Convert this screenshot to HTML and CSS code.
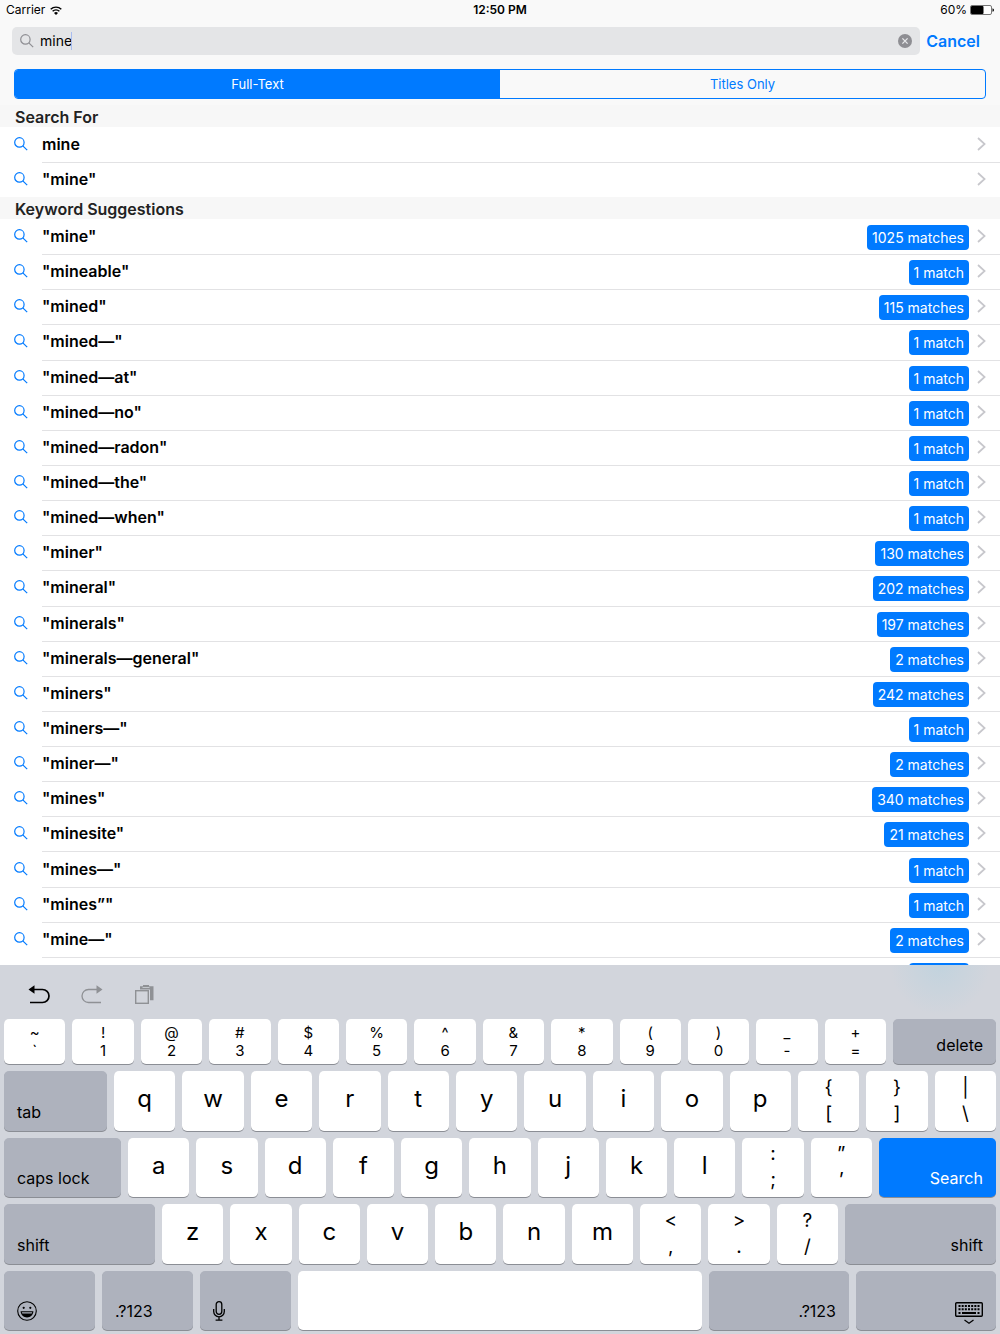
FILE: index.html
```html
<!DOCTYPE html>
<html lang="en">
<head>
	<meta charset="utf-8">
	<meta name="viewport" content="width=device-width, initial-scale=1">
	<title>Search</title>
	<link rel="stylesheet" href="styles.css">
</head>
<body>

	<!-- shared icons -->
	<svg class="sprite" aria-hidden="true">
		<symbol id="lens" viewBox="0 0 14 14"><circle cx="5.4" cy="5.4" r="4.7"/><path d="M8.8 8.8L13.2 13.2"/></symbol>
		<symbol id="chevron" viewBox="0 0 9 14"><path d="M1 1l6.6 6L1 13"/></symbol>
	</svg>

	<header class="top">
		<div class="status">
			<div class="status-left">
				<span>Carrier</span>
				<svg class="wifi" viewBox="0 0 12 9"><path d="M.7 3.3a7.6 7.6 0 0 1 10.6 0M2.6 5.3a4.9 4.9 0 0 1 6.8 0" fill="none" stroke="#000" stroke-width="1.4"/><path d="M6 8.9L4 6.9a2.9 2.9 0 0 1 4 0z"/></svg>
			</div>
			<strong class="clock">12:50 PM</strong>
			<div class="status-right">
				<span>60%</span>
				<svg class="battery" viewBox="0 0 24 10"><rect x=".5" y=".5" width="21" height="9" rx="1.5" fill="#fff" stroke="#777"/><rect x="1" y="1" width="12.5" height="8" rx="1"/><path d="M22.5 3.2q1.5.4 1.5 1.8t-1.5 1.8z"/></svg>
			</div>
		</div>

		<form class="search">
			<div class="search-box">
				<svg class="lens"><use href="#lens"/></svg>
				<input class="search-input" type="text" value="mine" aria-label="Search">
				<span class="caret"></span>
				<button class="clear" type="button" aria-label="Clear">
					<svg viewBox="0 0 14 14"><circle cx="7" cy="7" r="7" fill="#8e8e93"/><path d="M4.4 4.4l5.2 5.2M9.6 4.4L4.4 9.6" stroke="#e8e9eb" stroke-width="1.3"/></svg>
				</button>
			</div>
			<button class="cancel" type="button">Cancel</button>
		</form>

		<div class="segments">
			<button class="segment active" type="button">Full-Text</button>
			<button class="segment" type="button">Titles Only</button>
		</div>
	</header>

	<main class="results">
		<h2 class="heading">Search For</h2>
		<ul class="list">
			<li><a class="row" href="#"><svg class="lens"><use href="#lens"/></svg><span class="term">mine</span><svg class="chevron"><use href="#chevron"/></svg></a></li>
			<li><a class="row" href="#"><svg class="lens"><use href="#lens"/></svg><span class="term">"mine"</span><svg class="chevron"><use href="#chevron"/></svg></a></li>
		</ul>

		<h2 class="heading">Keyword Suggestions</h2>
		<ul class="list keywords">
			<li><a class="row" href="#"><svg class="lens"><use href="#lens"/></svg><span class="term">"mine"</span><span class="badge">1025 matches</span><svg class="chevron"><use href="#chevron"/></svg></a></li>
			<li><a class="row" href="#"><svg class="lens"><use href="#lens"/></svg><span class="term">"mineable"</span><span class="badge">1 match</span><svg class="chevron"><use href="#chevron"/></svg></a></li>
			<li><a class="row" href="#"><svg class="lens"><use href="#lens"/></svg><span class="term">"mined"</span><span class="badge">115 matches</span><svg class="chevron"><use href="#chevron"/></svg></a></li>
			<li><a class="row" href="#"><svg class="lens"><use href="#lens"/></svg><span class="term">"mined—"</span><span class="badge">1 match</span><svg class="chevron"><use href="#chevron"/></svg></a></li>
			<li><a class="row" href="#"><svg class="lens"><use href="#lens"/></svg><span class="term">"mined—at"</span><span class="badge">1 match</span><svg class="chevron"><use href="#chevron"/></svg></a></li>
			<li><a class="row" href="#"><svg class="lens"><use href="#lens"/></svg><span class="term">"mined—no"</span><span class="badge">1 match</span><svg class="chevron"><use href="#chevron"/></svg></a></li>
			<li><a class="row" href="#"><svg class="lens"><use href="#lens"/></svg><span class="term">"mined—radon"</span><span class="badge">1 match</span><svg class="chevron"><use href="#chevron"/></svg></a></li>
			<li><a class="row" href="#"><svg class="lens"><use href="#lens"/></svg><span class="term">"mined—the"</span><span class="badge">1 match</span><svg class="chevron"><use href="#chevron"/></svg></a></li>
			<li><a class="row" href="#"><svg class="lens"><use href="#lens"/></svg><span class="term">"mined—when"</span><span class="badge">1 match</span><svg class="chevron"><use href="#chevron"/></svg></a></li>
			<li><a class="row" href="#"><svg class="lens"><use href="#lens"/></svg><span class="term">"miner"</span><span class="badge">130 matches</span><svg class="chevron"><use href="#chevron"/></svg></a></li>
			<li><a class="row" href="#"><svg class="lens"><use href="#lens"/></svg><span class="term">"mineral"</span><span class="badge">202 matches</span><svg class="chevron"><use href="#chevron"/></svg></a></li>
			<li><a class="row" href="#"><svg class="lens"><use href="#lens"/></svg><span class="term">"minerals"</span><span class="badge">197 matches</span><svg class="chevron"><use href="#chevron"/></svg></a></li>
			<li><a class="row" href="#"><svg class="lens"><use href="#lens"/></svg><span class="term">"minerals—general"</span><span class="badge">2 matches</span><svg class="chevron"><use href="#chevron"/></svg></a></li>
			<li><a class="row" href="#"><svg class="lens"><use href="#lens"/></svg><span class="term">"miners"</span><span class="badge">242 matches</span><svg class="chevron"><use href="#chevron"/></svg></a></li>
			<li><a class="row" href="#"><svg class="lens"><use href="#lens"/></svg><span class="term">"miners—"</span><span class="badge">1 match</span><svg class="chevron"><use href="#chevron"/></svg></a></li>
			<li><a class="row" href="#"><svg class="lens"><use href="#lens"/></svg><span class="term">"miner—"</span><span class="badge">2 matches</span><svg class="chevron"><use href="#chevron"/></svg></a></li>
			<li><a class="row" href="#"><svg class="lens"><use href="#lens"/></svg><span class="term">"mines"</span><span class="badge">340 matches</span><svg class="chevron"><use href="#chevron"/></svg></a></li>
			<li><a class="row" href="#"><svg class="lens"><use href="#lens"/></svg><span class="term">"minesite"</span><span class="badge">21 matches</span><svg class="chevron"><use href="#chevron"/></svg></a></li>
			<li><a class="row" href="#"><svg class="lens"><use href="#lens"/></svg><span class="term">"mines—"</span><span class="badge">1 match</span><svg class="chevron"><use href="#chevron"/></svg></a></li>
			<li><a class="row" href="#"><svg class="lens"><use href="#lens"/></svg><span class="term">"mines”"</span><span class="badge">1 match</span><svg class="chevron"><use href="#chevron"/></svg></a></li>
			<li><a class="row" href="#"><svg class="lens"><use href="#lens"/></svg><span class="term">"mine—"</span><span class="badge">2 matches</span><svg class="chevron"><use href="#chevron"/></svg></a></li>
			<li><a class="row" href="#"><svg class="lens"><use href="#lens"/></svg><span class="term"></span><span class="badge">1 match</span><svg class="chevron"><use href="#chevron"/></svg></a></li>
		</ul>
	</main>

	<section class="keyboard">
		<div class="tools">
			<button class="tool" type="button" aria-label="Undo"><svg viewBox="0 0 22 20"><path d="M2 4.500h12.500a6.500 6.500 0 0 1 0 13H2" fill="none" stroke="#000" stroke-width="1.700"/><path d="M.5 4.500L6.500 .3v8.400z"/></svg></button>
			<button class="tool" type="button" aria-label="Redo"><svg viewBox="0 0 22 20"><path d="M20 4.500H7.500a6.500 6.500 0 0 0 0 13H20" fill="none" stroke="#8f9195" stroke-width="1.300"/><path d="M21.500 4.500L15.500 .3v8.400z" fill="#8f9195"/></svg></button>
			<button class="tool" type="button" aria-label="Paste"><svg viewBox="0 0 22 20"><path d="M6 1.200h3V0h6v1.200h4.500v14H16V4.500H6z" fill="#8f9195"/><path d="M8.500 2.500h7" stroke="#d2d5dc" stroke-width=".8"/><rect x="1.700" y="5.700" width="12.600" height="12.600" fill="#d2d5dc" stroke="#8f9195" stroke-width="1.400"/></svg></button>
		</div>

		<div class="keys">
			<div class="keys-row numbers">
				<button class="key"><span>~</span><span>`</span></button>
				<button class="key"><span>!</span><span>1</span></button>
				<button class="key"><span>@</span><span>2</span></button>
				<button class="key"><span>#</span><span>3</span></button>
				<button class="key"><span>$</span><span>4</span></button>
				<button class="key"><span>%</span><span>5</span></button>
				<button class="key"><span>^</span><span>6</span></button>
				<button class="key"><span>&amp;</span><span>7</span></button>
				<button class="key"><span>*</span><span>8</span></button>
				<button class="key"><span>(</span><span>9</span></button>
				<button class="key"><span>)</span><span>0</span></button>
				<button class="key"><span>_</span><span>-</span></button>
				<button class="key"><span>+</span><span>=</span></button>
				<button class="key side right tab">delete</button>
			</div>
			<div class="keys-row">
				<button class="key side tab">tab</button>
				<button class="key">q</button>
				<button class="key">w</button>
				<button class="key">e</button>
				<button class="key">r</button>
				<button class="key">t</button>
				<button class="key">y</button>
				<button class="key">u</button>
				<button class="key">i</button>
				<button class="key">o</button>
				<button class="key">p</button>
				<button class="key pair"><span>{</span><span>[</span></button>
				<button class="key pair"><span>}</span><span>]</span></button>
				<button class="key pair"><span>|</span><span>\</span></button>
			</div>
			<div class="keys-row">
				<button class="key side caps">caps lock</button>
				<button class="key">a</button>
				<button class="key">s</button>
				<button class="key">d</button>
				<button class="key">f</button>
				<button class="key">g</button>
				<button class="key">h</button>
				<button class="key">j</button>
				<button class="key">k</button>
				<button class="key">l</button>
				<button class="key pair"><span>:</span><span>;</span></button>
				<button class="key pair"><span>”</span><span>’</span></button>
				<button class="key side right caps go">Search</button>
			</div>
			<div class="keys-row">
				<button class="key side shift">shift</button>
				<button class="key">z</button>
				<button class="key">x</button>
				<button class="key">c</button>
				<button class="key">v</button>
				<button class="key">b</button>
				<button class="key">n</button>
				<button class="key">m</button>
				<button class="key pair"><span>&lt;</span><span>,</span></button>
				<button class="key pair"><span>&gt;</span><span>.</span></button>
				<button class="key pair"><span>?</span><span>/</span></button>
				<button class="key side right shift">shift</button>
			</div>
			<div class="keys-row">
				<button class="key side mode" aria-label="Emoji"><svg class="emoji" viewBox="0 0 20 20"><circle cx="10" cy="10" r="9.300" fill="none" stroke="#000" stroke-width="1.100"/><circle cx="6.700" cy="6.800" r="1.100"/><circle cx="13.300" cy="6.800" r="1.100"/><path d="M3.600 10.200h12.800c-.3 3.900-3 6.200-6.400 6.200s-6.100-2.300-6.400-6.200z"/><path d="M4.800 11.200h10.400l-.5 1.400H5.300z" fill="#aeb2bd"/></svg></button>
				<button class="key side mode">.?123</button>
				<button class="key side mode" aria-label="Dictation"><svg class="mic" viewBox="0 0 12 20"><g fill="none" stroke="#000" stroke-width="1.300"><rect x="3.200" y=".7" width="5.600" height="12.600" rx="2.800"/><path d="M.7 8v2.500a5.300 5.300 0 0 0 10.600 0V8M6 16v3M2.600 19.200h6.800"/></g></svg></button>
				<button class="key" aria-label="Space"></button>
				<button class="key side right wide">.?123</button>
				<button class="key side right wide" aria-label="Hide keyboard"><svg class="hide" viewBox="0 0 28 24"><rect x=".7" y="1.700" width="26.600" height="13.600" rx="1" fill="none" stroke="#000" stroke-width="1.400"/><path d="M3.500 5h21M3.500 8.300h21" stroke="#000" stroke-width="2" stroke-dasharray="2 1.170"/><path d="M3.500 12h2M7 12h14M22.500 12h2" stroke="#000" stroke-width="2"/><path d="M9.500 19l4.500 3.200 4.500-3.200" fill="none" stroke="#000" stroke-width="1.300"/></svg></button>
			</div>
		</div>
	</section>

</body>
</html>
```
FILE: styles.css
```css
* {box-sizing: border-box;}
body {margin: 0;height: 100vh;display: flex;flex-direction: column;overflow: hidden;background: #fff;color: #000;font: 16px/20px Inter, "Liberation Sans", sans-serif;}
button {border: 0;padding: 0;margin: 0;background: none;font: inherit;color: inherit;}
.sprite {display: none;}
.lens {width: 14px;height: 14px;flex: none;fill: none;stroke: #007aff;stroke-width: 1.2;}
.chevron {width: 9px;height: 14px;flex: none;fill: none;stroke: #c7c7cc;stroke-width: 1.7;}

/* top bar */
.top {flex: none;background: #f9f9f9;padding-bottom: 6px;}
.status {display: grid;grid-template-columns: 1fr auto 1fr;align-items: center;height: 20px;padding: 0 6px;font-size: 12px;}
.status-left, .status-right {display: flex;align-items: center;gap: 5px;}
.status-right {justify-content: flex-end;gap: 3px;}
.clock {font-weight: 600;}
.wifi {width: 12px;height: 9px;}
.battery {width: 24px;height: 10px;}

.search {display: flex;align-items: center;gap: 6px;margin: 0;padding: 7px 20px 14px 12px;}
.search-box {position: relative;flex: 1;display: flex;align-items: center;height: 28px;padding: 0 8px;border-radius: 5px;background: #e4e5e7;}
.search-box .lens {stroke: #8e8e93;}
.search-input {flex: 1;min-width: 0;height: 28px;border: 0;padding: 0 6px 2px;background: none;font: 14px/20px Inter, "Liberation Sans", sans-serif;color: #000;outline: none;}
.caret {position: absolute;left: 59px;top: 5px;width: 1px;height: 18px;background: #a9bdf0;}
.clear {width: 14px;height: 14px;}
.clear svg {display: block;}
.cancel {font-size: 16px;font-weight: 600;color: #007aff;}

.segments {display: flex;height: 30px;margin: 0 14px;border: 1px solid #007aff;border-radius: 4px;overflow: hidden;}
.segment {flex: 1;font-size: 13px;color: #007aff;}
.segment.active {background: #007aff;color: #fff;}

/* results */
.results {flex: 1;min-height: 0;overflow: hidden;}
.heading {margin: 0;height: 22px;padding: 0 15px;background: #f7f7f7;font-size: 16px;line-height: 24px;font-weight: 600;color: #222;}
.list {list-style: none;margin: 0;padding: 0;display: grid;grid-auto-rows: 35px;}
.keywords {min-height: 773px;grid-auto-rows: 1fr;}
.row {display: flex;align-items: center;height: 100%;padding: 0 14px 1px;color: #000;text-decoration: none;}
.term {flex: 1;margin-left: 14px;font-weight: 600;}
.list li + li {background: linear-gradient(#e2e2e4, #e2e2e4) 42px 0 / 100% 1px no-repeat;}
.badge {margin: 3px 8px 0 0;padding: 0 5px;border-radius: 4px;background: #007aff;color: #fff;font-size: 14px;line-height: 25px;}

/* keyboard */
.keyboard {flex: none;height: 369px;display: flex;flex-direction: column;padding: 0 4px 4px;background: radial-gradient(circle at 94% 0, #c2d3de 0, #d2d5dc 50px);}
.tools {display: flex;align-items: center;gap: 31px;height: 54px;padding: 6px 24px 0;}
.tool svg {display: block;width: 22px;height: 20px;}
.keys {flex: 1;display: grid;grid-template-rows: 45px;grid-auto-rows: 1fr;gap: 7px;}
.keys-row {display: flex;gap: 7px;}
.key {flex: 1 1 0;min-width: 0;display: flex;flex-direction: column;align-items: center;justify-content: center;padding-bottom: 3px;border-radius: 5px;background: #fff;box-shadow: 0 1px 0 #8b8e95;font-size: 24px;line-height: 30px;}
.numbers .key {padding: 1px 0 0;font-size: 15px;line-height: 18px;}
.pair {padding: 0;font-size: 19px;line-height: 26px;}
.side, .numbers .side {align-items: flex-start;justify-content: flex-end;padding: 0 13px 9px;background: #aeb2bd;font-size: 16px;line-height: 20px;}
.numbers .right, .right {align-items: flex-end;}
.tab {flex: 0 0 103px;}
.caps {flex: 0 0 117px;}
.shift {flex: 0 0 151px;}
.mode {flex: 0 0 91px;}
.wide {flex: 0 0 140px;}
.go {background: #007aff;color: #fff;}
.emoji {width: 20px;height: 20px;}
.mic {width: 12px;height: 20px;}
.hide {width: 28px;height: 24px;margin-bottom: -4px;}
```
